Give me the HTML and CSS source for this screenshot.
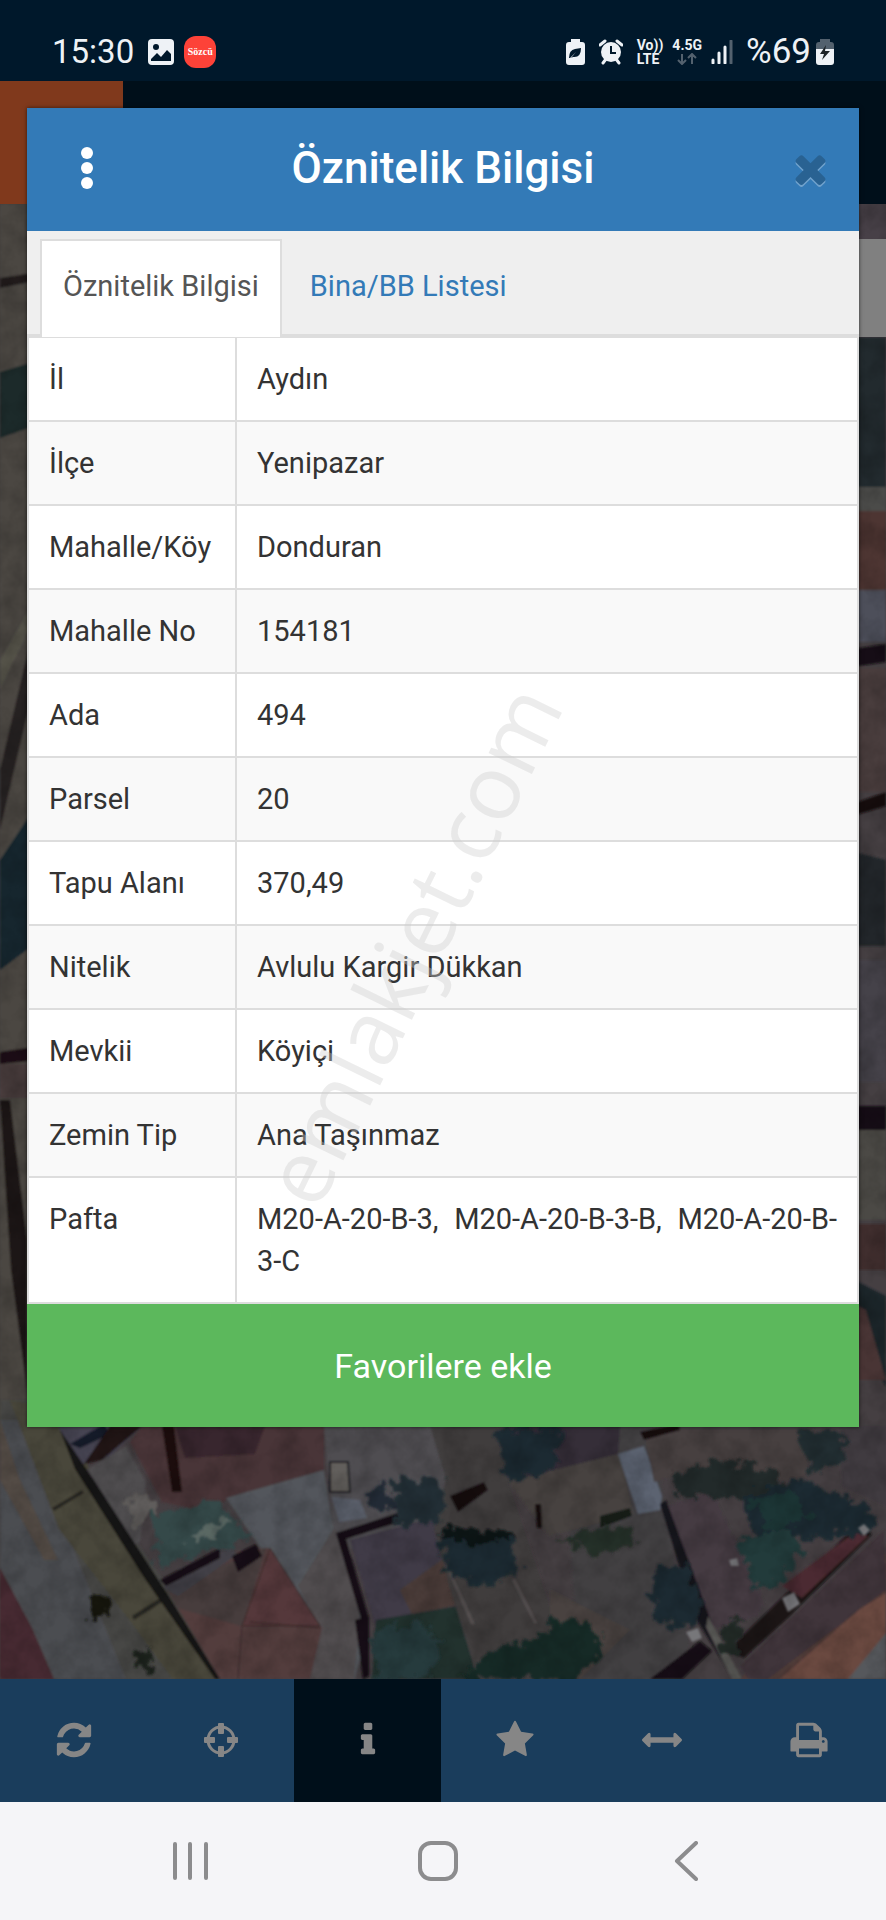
FILE: index.html
```html
<!DOCTYPE html>
<html lang="tr">
<head>
  <meta charset="utf-8">
  <meta name="viewport" content="width=device-width, initial-scale=1">
  <title>Öznitelik Bilgisi</title>
  <link rel="stylesheet" href="styles.css">
</head>
<body>
  <div class="statusbar">
    <span class="clock">15:30</span>
    <svg class="photo-icon" width="26" height="26" viewBox="0 0 26 26">
      <rect x="0" y="0" width="26" height="26" rx="4" fill="#eef2f6"/>
      <circle cx="8" cy="8" r="3" fill="#00182b"/>
      <path d="M3 20l6-6 4 4 6-7 4 4v7H3z" fill="#00182b"/>
    </svg>
    <span class="news-icon">Sözcü</span>

    <div class="status-right">
      <svg width="19" height="26" viewBox="0 0 19 26">
        <path d="M5 0h9v3h2q3 0 3 3v17q0 3-3 3H3q-3 0-3-3V6q0-3 3-3h2z" fill="#eef2f6"/>
        <path d="M3 19q0-8 6-9l6-1q0 10-8 9l-2 1 5-6-6 6z" fill="#00182b"/>
      </svg>
      <svg class="alarm-icon" width="24" height="26" viewBox="0 0 24 26">
        <circle cx="12" cy="13" r="10" fill="#eef2f6"/>
        <path d="M1 6l5-4M23 6l-5-4M4 24l3-4M20 24l-3-4" stroke="#eef2f6" stroke-width="3" stroke-linecap="round"/>
        <path d="M12 7v7h5" fill="none" stroke="#00182b" stroke-width="2"/>
      </svg>
      <span class="net">Vo))<br>LTE</span>
      <span class="net">4.5G
        <svg width="20" height="12" viewBox="0 0 20 12">
          <path d="M5 1v10M1 7l4 4 4-4M15 11V1M11 5l4-4 4 4" fill="none" stroke="#53616e" stroke-width="2"/>
        </svg>
      </span>
      <svg width="22" height="24" viewBox="0 0 22 24">
        <path d="M2 23v-3M8 23V13M14 23V7" stroke="#eef2f6" stroke-width="3" stroke-linecap="round"/>
        <path d="M20 23V1" stroke="#53616e" stroke-width="3" stroke-linecap="round"/>
      </svg>
      <span class="percent">%69</span>
      <svg width="18" height="26" viewBox="0 0 18 26">
        <path d="M4 0h10v3h1q3 0 3 3v5H0V6q0-3 3-3h1z" fill="#53616e"/>
        <path d="M0 10h18v13q0 3-3 3H3q-3 0-3-3z" fill="#eef2f6"/>
        <path d="M10 6L4 15h4l-2 6 8-9h-5z" fill="#1c2226"/>
      </svg>
    </div>
  </div>

  <div class="stage">
    <div class="behind">
      <div class="app-header"><div class="app-logo"></div></div>
      <svg class="map" viewBox="0 204 886 1475" preserveAspectRatio="xMidYMax slice">
        <defs>
          <filter id="rough" x="-5%" y="-5%" width="110%" height="110%">
            <feTurbulence type="fractalNoise" baseFrequency="0.09" numOctaves="3" seed="4" result="n"/>
            <feDisplacementMap in="SourceGraphic" in2="n" scale="24" xChannelSelector="R" yChannelSelector="G" result="d"/>
            <feGaussianBlur in="d" stdDeviation="1"/>
          </filter>
          <filter id="soft"><feGaussianBlur stdDeviation="1"/></filter>
          <filter id="grain" x="0" y="0" width="100%" height="100%">
            <feTurbulence type="fractalNoise" baseFrequency="0.04" numOctaves="4" seed="9"/>
            <feColorMatrix values="0 0 0 0 0  0 0 0 0 0  0 0 0 0 0  1.4 0 0 0 -0.5"/>
          </filter>
        </defs>
        <rect x="0" y="204" width="886" height="1475" fill="#453f42"/>
        <!-- left edge -->
        <g filter="url(#soft)">
          <path d="M0 204h40v1240H0z" fill="#4b4743"/>
          <path d="M0 278l40-6v8l-40 8z" fill="#211e1c"/>
          <path d="M0 372l40-12v64l-40 14z" fill="#1b2a2c"/>
          <path d="M0 770l40-170v60L0 830z" fill="#282420"/>
          <path d="M0 660l34-60v20L0 690z" fill="#54524a"/>
          <path d="M0 860l40-60v140l-40 30z" fill="#16272d"/>
          <path d="M0 1052l40-6v14l-40 4z" fill="#1c1012"/>
          <path d="M0 1064h40v34H0z" fill="#4a3d3d"/>
          <path d="M0 1100l10 0 17 140v150l-16-120z" fill="#1d1715"/>
        </g>
        <!-- right edge -->
        <g filter="url(#soft)">
          <path d="M846 204h40v136h-40z" fill="#464046"/>
          <path d="M846 337h40v150h-40z" fill="#222c2f"/>
          <path d="M846 487h40v26h-40z" fill="#4c4c4a"/>
          <path d="M846 511h40v82h-40z" fill="#4d3532"/>
          <path d="M846 590h40v52h-40z" fill="#4e505a"/>
          <path d="M846 650l40-6v18l-40 6z" fill="#120f12"/>
          <path d="M846 668h40v124h-40z" fill="#483d3e"/>
          <path d="M846 806l40-14v14l-40 12z" fill="#170f10"/>
          <path d="M846 850l40 10v86h-40z" fill="#22272c"/>
          <path d="M846 960h40v122h-40z" fill="#45434a"/>
          <path d="M846 1106h40v24h-40z" fill="#151113"/>
          <path d="M846 1130h40v90h-40z" fill="#4c4a44"/>
          <path d="M846 1224h40v46h-40z" fill="#3f2d2d"/>
          <path d="M846 1276l40 20v90l-40-60z" fill="#1a2629"/>
          <path d="M846 1300l20 10 20 70h-40z" fill="#493636"/>
        </g>
        <!-- roads and roofs, lower left -->
        <g filter="url(#soft)">
          <path d="M0 1400h60l20 60 90 130 50 89H60L0 1560z" fill="#474744"/>
          <path d="M0 1420l26 0 40 110 60 149H54L0 1568z" fill="#4c4d51"/>
          <path d="M0 1420l20 60 38 80-14 0L0 1480z" fill="#524b45"/>
          <path d="M0 1568l32 60 22 51H0z" fill="#462b30"/>
          <path d="M10 1400l50 10 45 90 60 90 54 89h-46l-44-60-70-90z" fill="#49473a"/>
          <path d="M52 1508l30-18 2 3-30 18zM132 1616l28-18 2 4-28 18z" fill="#272520"/>
          <path d="M58 1426h84l-34 32-26 6-16-20z" fill="#474552"/>
          <path d="M70 1444l34-20 6 10-30 14z" fill="#161a2a"/>
          <path d="M110 1426h32l-40 34-18 4z" fill="#201519"/>
          <path d="M86 1470l40-24 20 36-6 60-14 4z" fill="#4f4d50"/>
          <path d="M142 1426h182v44l-98 30-18 12-46-10-32-60z" fill="#4a3537"/>
          <path d="M175 1426h90l-10 28-70 4z" fill="#38272f"/>
          <path d="M162 1426h12l8 66h-10z" fill="#1b0c0e"/>
          <path d="M324 1426h120l30 50v60l-110 20-30-18z" fill="#504e51"/>
          <path d="M226 1498l98-28 10 62 35 90-14 57h-26l-12-56-60-80z" fill="#52565b"/>
          <path d="M334 1528l16 18 10 76-6 57h-90l56-51-22-42z" fill="#514d50"/>
          <path d="M166 1588l64-36 38-4 54 80-12 51h-90z" fill="#523c3d"/>
          <path d="M166 1588l100-40-24 78-64-18z" fill="#463c3d"/>
          <path d="M270 1548l50 78-78 0zM242 1626l-4 53M320 1628l-70-6" fill="#54393a" stroke="#3b2829" stroke-width="1"/>
          <path d="M164 1588l16-20 50-20 8 6-60 42z" fill="#434147"/>
          <path d="M60 1430l34 50 76 118 50 81-5 0-70-100-70-110z" fill="#181716"/>
          <path d="M160 1580l60-32v10l-54 28zM232 1556l24-12 6 12-24 16z" fill="#170e12"/>
          <path d="M350 1540l104-28 34 70-110 54z" fill="#403a46"/>
          <path d="M376 1620l82-14 20 73h-106z" fill="#22302f"/>
          <path d="M400 1590l50-36 22 48-60 12z" fill="#493b38"/>
          <path d="M336 1533l62-20 4 8-56 18 22 76-4 14zM355 1620l14-4 0 60-6 3z" fill="#150e13"/>
          <path d="M330 1462h18l2 30h-20z" fill="#625f5b" stroke="#1d1f22" stroke-width="2"/>
          <path d="M332 1497l28 3 7 18-28 4z" fill="#5a5f6a"/>
        </g>
        <!-- yards and roofs, lower right -->
        <g filter="url(#soft)">
          <path d="M430 1426h66l14 60 40 120 60 73H478l-28-90-16-60 12-50z" fill="#3f3c3e"/>
          <path d="M560 1426h90l10 50 30 170-20 33h-90z" fill="#433f42"/>
          <path d="M507 1480l112-30 14 64-84 22z" fill="#464241"/>
          <path d="M550 1590l80 40-50 49h-30z" fill="#48433f"/>
          <path d="M504 1426h116l-2 28-96 24z" fill="#342f39"/>
          <path d="M618 1454l26-8 18 50-2 14-22 4z" fill="#5b6371"/>
          <path d="M644 1430h170l-10 54-100-16-50 14z" fill="#463f40"/>
          <path d="M666 1506l46-14 52 110-6 14-50 14z" fill="#443b42"/>
          <path d="M660 1504l6-4 46 124 26 55h-5l-38-62z" fill="#17131a"/>
          <path d="M708 1616l34 63h-10l-26-52z" fill="#595855"/>
          <path d="M640 1432l38-8 2 6-36 10zM450 1496l34-14 4 8-30 22zM535 1504l6 0 1 24-5 0z" fill="#190d11"/>
          <path d="M600 1516l30-8 2 8-32 12z" fill="#131a19"/>
          <path d="M740 1679l146-126v126z" fill="#503b39"/>
          <path d="M740 1666l144-136 2 60-118 89h-20z" fill="#41353a"/>
          <path d="M780 1679l80-70 26-16v86z" fill="#6b4a41"/>
          <path d="M848 1679l38-46v46z" fill="#56585c"/>
          <path d="M728 1650l130-126 14 10-84 84-44 40z" fill="#1c1317"/>
          <path d="M782 1586l76-56 10 6-66 62z" fill="#4b2b30"/>
          <path d="M650 1679l50-38 12 10-30 28z" fill="#120c12"/>
          <path d="M840 1426h46v80l-44-20z" fill="#413b41"/>
          <path d="M445 1564l4 4 26 56-4 0zM512 1580l3-1 22 44-3 0z" fill="#555050"/>
        </g>
        <!-- trees -->
        <g filter="url(#rough)">
          <path d="M124 1502l26-10 6 20-20 16z" fill="#605d5b"/>
          <path d="M150 1514l70-12 34 38-54 14-40 14z" fill="#34484a"/>
          <path d="M186 1538l40-20 8 6-38 20z" fill="#5a6764"/>
          <path d="M392 1478h50v44l-44 4z" fill="#222e34"/>
          <path d="M366 1506l26 6 6-6-20-26z" fill="#242b35"/>
          <path d="M96 1594l16 6-8 16-14 2z" fill="#12130f"/>
          <path d="M132 1652l16-2 6 16-14 4z" fill="#1f211c"/>
          <path d="M496 1430h66l-6 36-46 20z" fill="#1c2a33"/>
          <path d="M440 1536l72 2 8 32-30 16-44-12z" fill="#1d2c30"/>
          <path d="M560 1536l70-12 4 20-40 12z" fill="#27302a"/>
          <path d="M374 1630l50-8 16 20-8 37h-56z" fill="#263b3c"/>
          <path d="M460 1679l30-30 50-10 14-20 40 4 10 30-30 26z" fill="#172a27"/>
          <path d="M652 1572l36-8 16 40-16 24-34-8z" fill="#1c2a30"/>
          <path d="M668 1476l50-14 44 6 20 10-14 24-40-6-50 0z" fill="#222b2b"/>
          <path d="M740 1494l60-14 50 20 28 14-8 20-56 4-60-4z" fill="#1f2b30"/>
          <path d="M740 1540l48-14 14 22-20 36-30 6z" fill="#203a3a"/>
          <path d="M750 1500l40-10 20 26-38 14z" fill="#1f3536"/>
          <path d="M794 1432l48-4 6 26-34 20z" fill="#212d30"/>
          <path d="M718 1626l26-8-4 34-18 4z" fill="#232b28"/>
          <path d="M436 1534l20-6 56 2 2 8-40 6z" fill="#101518"/>
        </g>
        <g filter="url(#soft)" fill="#77777a">
          <path d="M782 1598l12-6 6 12-12 8zM686 1632l12-4 4 10-10 4zM729 1560l8-2 2 8-8 0zM858 1528l6-4 6 6-6 6z"/>
        </g>
        <rect x="0" y="204" width="886" height="1475" filter="url(#grain)" opacity=".25"/>
      </svg>
      <div class="map-control"></div>
    </div>

    <div class="modal" role="dialog" aria-labelledby="modal-title">
      <div class="modal-header">
        <button class="icon-btn" aria-label="Menü">
          <svg width="12" height="42" viewBox="0 0 12 42" fill="#fff">
            <circle cx="6" cy="6" r="6"/><circle cx="6" cy="21" r="6"/><circle cx="6" cy="36" r="6"/>
          </svg>
        </button>
        <h1 id="modal-title">Öznitelik Bilgisi</h1>
        <button class="icon-btn close" aria-label="Kapat">
          <svg width="45" height="45" viewBox="0 0 1792 1792"><path d="M1490 1322q0 40-28 68l-136 136q-28 28-68 28t-68-28l-294-294-294 294q-28 28-68 28t-68-28l-136-136q-28-28-28-68t28-68l294-294-294-294q-28-28-28-68t28-68l136-136q28-28 68-28t68 28l294 294 294-294q28-28 68-28t68 28l136 136q28 28 28 68t-28 68l-294 294 294 294q28 28 28 68z"/></svg>
        </button>
      </div>

      <div class="tabs">
        <a href="#oznitelik" class="tab active">Öznitelik Bilgisi</a>
        <a href="#bina" class="tab">Bina/BB Listesi</a>
      </div>

      <table id="oznitelik">
        <tr><th scope="row">İl</th><td>Aydın</td></tr>
        <tr><th scope="row">İlçe</th><td>Yenipazar</td></tr>
        <tr><th scope="row">Mahalle/Köy</th><td>Donduran</td></tr>
        <tr><th scope="row">Mahalle No</th><td>154181</td></tr>
        <tr><th scope="row">Ada</th><td>494</td></tr>
        <tr><th scope="row">Parsel</th><td>20</td></tr>
        <tr><th scope="row">Tapu Alanı</th><td>370,49</td></tr>
        <tr><th scope="row">Nitelik</th><td>Avlulu Kargir Dükkan</td></tr>
        <tr><th scope="row">Mevkii</th><td>Köyiçi</td></tr>
        <tr><th scope="row">Zemin Tip</th><td>Ana Taşınmaz</td></tr>
        <tr><th scope="row">Pafta</th><td>M20-A-20-B-3, M20-A-20-B-3-B, M20-A-20-B-3-C</td></tr>
      </table>

      <button class="favorite">Favorilere ekle</button>
      <div class="watermark">emlakjet.com</div>
    </div>
  </div>

  <div class="toolbar">
    <button aria-label="Yenile">
      <svg viewBox="0 0 1792 1792"><path d="M1639 1056q0 5-1 7-64 268-268 434.500t-478 166.500q-146 0-282.500-55t-243.500-157l-129 129q-19 19-45 19t-45-19-19-45v-448q0-26 19-45t45-19h448q26 0 45 19t19 45-19 45l-137 137q71 66 161 102t187 36q134 0 250-65t186-179q11-17 53-117 8-23 30-23h192q13 0 22.500 9.500t9.500 22.500zm25-800v448q0 26-19 45t-45 19h-448q-26 0-45-19t-19-45 19-45l138-138q-148-137-349-137-134 0-250 65t-186 179q-11 17-53 117-8 23-30 23h-199q-13 0-22.500-9.500t-9.500-22.500v-7q65-268 270-434.500t480-166.500q146 0 284 55.500t245 156.500l130-129q19-19 45-19t45 19 19 45z"/></svg>
    </button>
    <button aria-label="Konum">
      <svg viewBox="0 0 40 40">
        <circle cx="20" cy="20" r="13" fill="none" stroke="#868686" stroke-width="3"/>
        <rect x="17" y="3" width="6" height="11" rx="1"/><rect x="17" y="26" width="6" height="11" rx="1"/>
        <rect x="3" y="17" width="11" height="6" rx="1"/><rect x="26" y="17" width="11" height="6" rx="1"/>
      </svg>
    </button>
    <button class="active" aria-label="Bilgi">
      <svg viewBox="0 0 1792 1792"><path d="M1216 1344v128q0 26-19 45t-45 19h-512q-26 0-45-19t-19-45v-128q0-26 19-45t45-19h64v-384h-64q-26 0-45-19t-19-45v-128q0-26 19-45t45-19h384q26 0 45 19t19 45v576h64q26 0 45 19t19 45zm-128-1152v192q0 26-19 45t-45 19h-256q-26 0-45-19t-19-45v-192q0-26 19-45t45-19h256q26 0 45 19t19 45z"/></svg>
    </button>
    <button aria-label="Favoriler">
      <svg viewBox="0 0 1792 1792"><path d="M1728 647q0 22-26 48l-363 354 86 500q1 7 1 20 0 21-10.500 35.500t-30.500 14.500q-19 0-40-12l-449-236-449 236q-22 12-40 12-21 0-31.500-14.500t-10.500-35.500q0-6 2-20l86-500-364-354q-25-27-25-48 0-37 56-46l502-73 225-455q19-41 49-41t49 41l225 455 502 73q56 9 56 46z"/></svg>
    </button>
    <button aria-label="Ölçüm">
      <svg viewBox="0 0 1792 1792"><path d="M1792 896q0 26-19 45l-256 256q-19 19-45 19t-45-19-19-45v-128h-1024v128q0 26-19 45t-45 19-45-19l-256-256q-19-19-19-45t19-45l256-256q19-19 45-19t45 19 19 45v128h1024v-128q0-26 19-45t45-19 45 19l256 256q19 19 19 45z"/></svg>
    </button>
    <button aria-label="Yazdır">
      <svg viewBox="0 0 1792 1792"><path d="M448 1536h896v-256h-896v256zm0-640h896v-384h-160q-40 0-68-28t-28-68v-160h-640v640zm1152 64q0-26-19-45t-45-19-45 19-19 45 19 45 45 19 45-19 19-45zm128 0v416q0 13-9.500 22.500t-22.500 9.500h-224v160q0 40-28 68t-68 28h-960q-40 0-68-28t-28-68v-160h-224q-13 0-22.500-9.500t-9.500-22.500v-416q0-79 56.500-135.500t135.500-56.500h64v-544q0-40 28-68t68-28h672q40 0 88 20t76 48l152 152q28 28 48 76t20 88v256h64q79 0 135.500 56.500t56.500 135.500z"/></svg>
    </button>
  </div>

  <div class="navbar">
    <button aria-label="Son uygulamalar">
      <svg width="40" height="40" viewBox="0 0 40 40"><path d="M5 3v34M20 3v34M36 3v34"/></svg>
    </button>
    <button aria-label="Ana ekran">
      <svg width="40" height="40" viewBox="0 0 40 40"><rect x="2" y="2" width="36" height="36" rx="11"/></svg>
    </button>
    <button aria-label="Geri">
      <svg width="40" height="40" viewBox="0 0 40 40"><path d="M30 2L11 20l19 18"/></svg>
    </button>
  </div>
</body>
</html>
```

FILE: styles.css
```css
* {
  box-sizing: border-box;
}
body {
  margin: 0;
  min-height: 100vh;
  display: flex;
  flex-direction: column;
  font-family: Roboto, "Liberation Sans", sans-serif;
  font-size: 29px;
  line-height: 42px;
  color: #333;
  background: #00182b;
}
button {
  border: none;
  padding: 0;
  background: none;
  font: inherit;
  cursor: pointer;
}
svg {
  display: block;
}

/* phone status bar */
.statusbar {
  display: flex;
  align-items: center;
  height: 81px;
  padding: 22px 52px 0 52px;
  color: #eef2f6;
  background: #00182b;
}
.clock, .percent {
  font-size: 33px;
  line-height: 36px;
}
.photo-icon {
  margin-left: 14px;
}
.news-icon {
  width: 32px;
  height: 32px;
  margin-left: 10px;
  border-radius: 12px;
  background: #fd4238;
  color: #fff;
  font: bold 10px/32px "Liberation Serif", serif;
  text-align: center;
}
.status-right {
  display: flex;
  align-items: center;
  gap: 9px;
  margin-left: auto;
}
.alarm-icon {
  margin: 0 5px;
}
.net {
  font-size: 14px;
  font-weight: 700;
  line-height: 14px;
}
.net svg {
  margin: 1px auto;
}
.percent {
  margin: 0 -4px 0 4px;
  font-size: 35px;
}

/* dimmed application behind the dialog */
.stage {
  position: relative;
  flex: 1;
  padding: 27px;
}
.behind {
  position: absolute;
  inset: 0;
  display: flex;
  flex-direction: column;
  overflow: hidden;
}
.app-header {
  height: 123px;
  background: #000f1a;
}
.app-logo {
  width: 123px;
  height: 123px;
  background: #80391c;
}
.map {
  flex: 1;
  min-height: 0;
  width: 100%;
}
.map-control {
  position: absolute;
  top: 158px;
  right: 0;
  width: 96px;
  height: 98px;
  background: #808080;
}

/* dialog */
.modal {
  position: relative;
  background: #fff;
  box-shadow: 0 0 4px rgba(0, 0, 0, 0.6);
}
.modal-header {
  display: flex;
  align-items: center;
  justify-content: space-between;
  height: 123px;
  padding: 0 20px 3px;
  background: #337ab7;
}
.modal-header h1 {
  margin: 0;
  font-size: 44px;
  font-weight: 500;
  line-height: 60px;
  color: #fff;
}
.icon-btn {
  display: flex;
  align-items: center;
  justify-content: center;
  width: 80px;
  height: 80px;
}
.icon-btn.close {
  justify-content: flex-end;
  padding-right: 6px;
  fill: #296292;
  filter: drop-shadow(0 2px 0 rgba(255, 255, 255, 0.3));
}
.tabs {
  display: flex;
  gap: 5px;
  height: 107px;
  padding: 8px 13px 0;
  background: #efefef;
  border-bottom: 4px solid #ddd;
}
.tab {
  height: 98px;
  padding: 24px 21px;
  border: 2px solid transparent;
  border-bottom: none;
  color: #337ab7;
  text-decoration: none;
}
.tab.active {
  color: #555;
  background: #fff;
  border-color: #ddd;
}
table {
  width: 100%;
  border-collapse: collapse;
  border: 2px solid #ddd;
  border-top: none;
}
th, td {
  padding: 20px;
  border: 2px solid #ddd;
  font-weight: 400;
  text-align: left;
  vertical-align: top;
}
tr:first-child th, tr:first-child td {
  border-top: none;
}
th {
  width: 208px;
  white-space: nowrap;
}
td {
  text-align: justify;
}
tr:nth-child(even) {
  background: #f9f9f9;
}
.favorite {
  display: block;
  width: 100%;
  height: 123px;
  font-size: 34px;
  color: #fff;
  background: #5cb85c;
}
.watermark {
  position: absolute;
  left: 46%;
  top: 836px;
  font-family: "Open Sans", sans-serif;
  font-size: 90px;
  line-height: 100px;
  color: rgba(205, 205, 205, 0.38);
  transform: translate(-50%, -50%) rotate(-64deg);
  pointer-events: none;
}

/* map toolbar */
.toolbar {
  display: flex;
  height: 123px;
  padding-right: 4px;
  background: #1a3d5c;
}
.toolbar button {
  flex: 1;
  display: flex;
  align-items: center;
  justify-content: center;
  padding-bottom: 2px;
}
.toolbar button.active {
  background: #000f1a;
}
.toolbar svg {
  width: 40px;
  height: 40px;
  fill: #868686;
}

/* android navigation */
.navbar {
  display: flex;
  justify-content: center;
  gap: 208px;
  height: 118px;
  padding-right: 10px;
  background: #f5f5f8;
}
.navbar svg {
  fill: none;
  stroke: #8c8c8e;
  stroke-width: 4;
  stroke-linecap: round;
  stroke-linejoin: round;
}
```
